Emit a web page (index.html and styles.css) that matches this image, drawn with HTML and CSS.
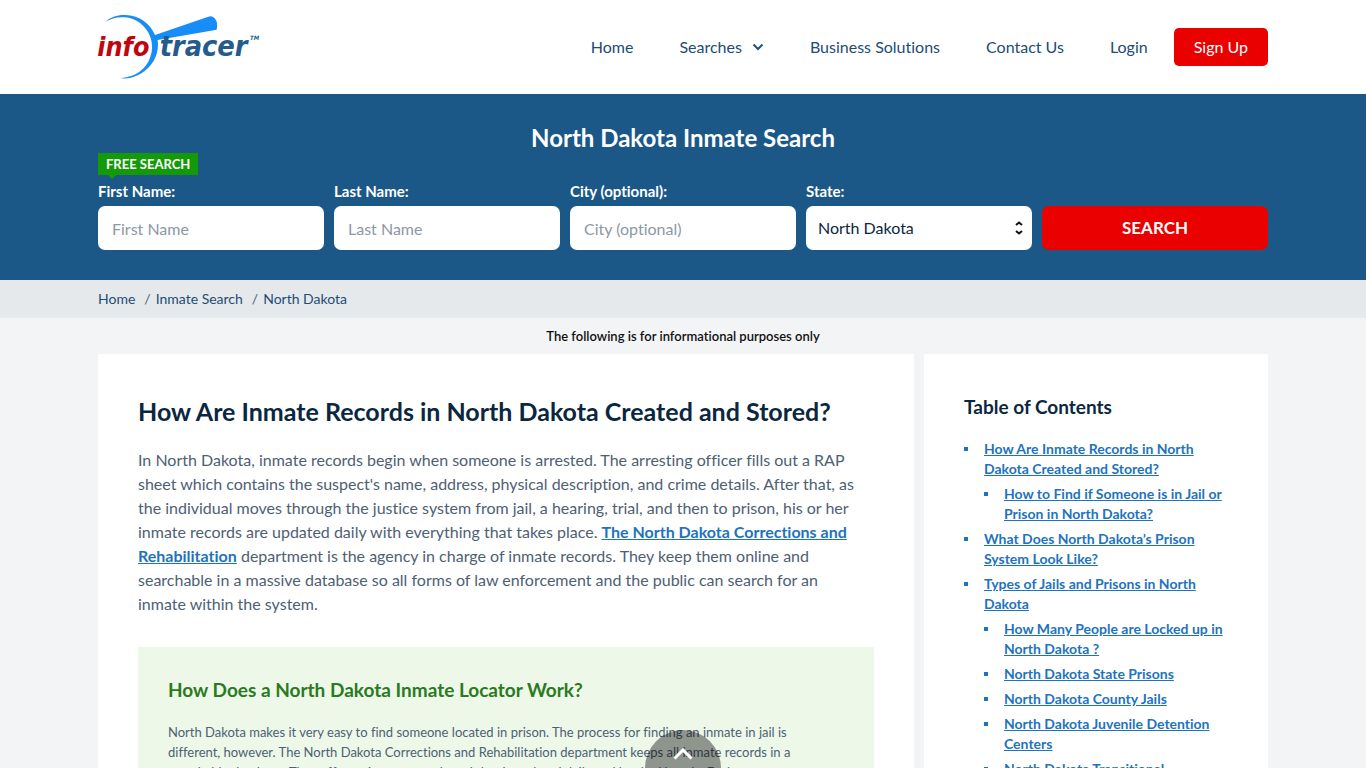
FILE: index.html
```html
<!DOCTYPE html>
<html lang="en">
<head>
<meta charset="utf-8">
<meta name="viewport" content="width=device-width, initial-scale=1">
<title>North Dakota Inmate Search</title>
<link rel="stylesheet" href="styles.css">
</head>
<body>
<header class="header">
  <div class="container header-row">
    <a class="logo" href="#" aria-label="InfoTracer">
      <svg viewBox="24 30 486 195" width="162" height="65" aria-hidden="true">
        <path fill="#168df7" d="M46 50C62 36 83 29 106 30C150 31 181 57 195 90L355 35Q366 31 374 40Q385 53 380 74L203 105C208 140 194 175 164 198C143 214 117 224 89 219C121 219 149 206 168 181C186 157 191 124 181 96C169 62 137 39 104 37C82 35 63 41 46 50Z"/>
        <text class="logo-info" x="22" y="153">info</text>
        <text class="logo-tracer" x="209" y="153">tracer</text>
        <text class="logo-tm" x="480" y="106">TM</text>
      </svg>
    </a>
    <nav class="nav" aria-label="Main">
      <a class="nav-link" href="#">Home</a>
      <a class="nav-link" href="#">Searches
        <svg class="chevron" viewBox="0 0 12 8" width="12" height="8" aria-hidden="true"><path d="M1.5 1.5L6 6L10.500 1.500"/></svg>
      </a>
      <a class="nav-link" href="#">Business Solutions</a>
      <a class="nav-link" href="#">Contact Us</a>
      <a class="nav-link" href="#">Login</a>
      <a class="signup" href="#">Sign Up</a>
    </nav>
  </div>
</header>

<section class="hero">
  <div class="container">
    <h1 class="hero-title">North Dakota Inmate Search</h1>
    <form class="search">
      <span class="free-tag">FREE SEARCH</span>
      <div class="field">
        <label for="first">First Name:</label>
        <input class="control" id="first" type="text" placeholder="First Name">
      </div>
      <div class="field">
        <label for="last">Last Name:</label>
        <input class="control" id="last" type="text" placeholder="Last Name">
      </div>
      <div class="field">
        <label for="city">City (optional):</label>
        <input class="control" id="city" type="text" placeholder="City (optional)">
      </div>
      <div class="field">
        <label for="state">State:</label>
        <div class="select-wrap">
          <select class="control select" id="state"><option>North Dakota</option></select>
          <svg class="select-icon" viewBox="0 0 8 14" width="8" height="14" aria-hidden="true"><path d="M1 4L4 1.500L7 4M1 10L4 12.500L7 10"/></svg>
        </div>
      </div>
      <button class="search-btn" type="submit">SEARCH</button>
    </form>
  </div>
</section>

<nav class="crumbs" aria-label="Breadcrumb">
  <ol class="container crumb-list">
    <li><a href="#">Home</a></li>
    <li><a href="#">Inmate Search</a></li>
    <li><a href="#">North Dakota</a></li>
  </ol>
</nav>

<p class="notice">The following is for informational purposes only</p>

<div class="container columns">
  <main class="panel article">
    <h2 class="title">How Are Inmate Records in North Dakota Created and Stored?</h2>
    <p class="text">In North Dakota, inmate records begin when someone is arrested. The arresting officer fills out a RAP sheet which contains the suspect's name, address, physical description, and crime details. After that, as the individual moves through the justice system from jail, a hearing, trial, and then to prison, his or her inmate records are updated daily with everything that takes place. <a class="link" href="#">The North Dakota Corrections and Rehabilitation</a> department is the agency in charge of inmate records. They keep them online and searchable in a massive database so all forms of law enforcement and the public can search for an inmate within the system.</p>
    <section class="callout">
      <h3 class="callout-title">How Does a North Dakota Inmate Locator Work?</h3>
      <p class="callout-text">North Dakota makes it very easy to find someone located in prison. The process for finding an inmate in jail is different, however. The North Dakota Corrections and Rehabilitation department keeps all inmate records in a searchable database. They offer an inmate search tool that is updated daily and booked hourly. Each</p>
    </section>
  </main>
  <aside class="panel toc">
    <h2 class="toc-title">Table of Contents</h2>
    <ul class="toc-list">
      <li><a href="#">How Are Inmate Records in North Dakota Created and Stored?</a>
        <ul>
          <li><a href="#">How to Find if Someone is in Jail or Prison in North Dakota?</a></li>
        </ul>
      </li>
      <li><a href="#">What Does North Dakota’s Prison System Look Like?</a></li>
      <li><a href="#">Types of Jails and Prisons in North Dakota</a>
        <ul>
          <li><a href="#">How Many People are Locked up in North Dakota ?</a></li>
          <li><a href="#">North Dakota State Prisons</a></li>
          <li><a href="#">North Dakota County Jails</a></li>
          <li><a href="#">North Dakota Juvenile Detention Centers</a></li>
          <li><a href="#">North Dakota Transitional</a></li>
        </ul>
      </li>
    </ul>
  </aside>
</div>

<button class="to-top" type="button" aria-label="Back to top">
  <svg viewBox="0 0 20 12" width="20" height="12" aria-hidden="true"><path d="M1.500 10.500L10 2L18.500 10.500"/></svg>
</button>
</body>
</html>
```

FILE: styles.css
```css
* { box-sizing: border-box; }

body {
  margin: 0;
  background: #f2f4f6;
  color: #4e6074;
  font: 16px/24px Lato, "Liberation Sans", sans-serif;
  font-variant-ligatures: none;
}

h1, h2, h3, p, ul, ol { margin: 0; padding: 0; }

.container {
  width: 100%;
  max-width: 1190px;
  margin: 0 auto;
  padding: 0 10px;
}

.header { background: #fff; }

.header-row {
  display: flex;
  align-items: center;
  justify-content: space-between;
  min-height: 94px;
}

.logo svg { display: block; overflow: visible; }

.logo text {
  font-family: "DejaVu Sans Condensed", "DejaVu Sans", sans-serif;
  font-stretch: condensed;
  font-style: italic;
  font-weight: 700;
}

.logo-info { fill: #c00510; font-size: 80px; }
.logo-tracer { fill: #245b8c; font-size: 86px; }
.logo .logo-tm { fill: #245b8c; font-size: 18px; }

.nav { display: flex; align-items: center; gap: 46px; }

.nav-link {
  display: flex;
  align-items: center;
  gap: 10px;
  color: #1d4c74;
  text-decoration: none;
}

.chevron path {
  fill: none;
  stroke: #1b5480;
  stroke-width: 2;
}

.signup {
  margin-left: -20px;
  padding: 7px 20px;
  border-radius: 5px;
  background: #eb0000;
  color: #fff;
  text-decoration: none;
}

.hero {
  padding: 30px 0;
  background: #1b5887;
  color: #fff;
}

.hero-title {
  font-size: 24px;
  line-height: 28px;
  text-align: center;
}

.search {
  position: relative;
  display: grid;
  grid-template-columns: repeat(5, 1fr);
  align-items: end;
  gap: 10px;
  margin-top: 1px;
  padding-top: 28px;
}

.free-tag {
  position: absolute;
  top: 0;
  left: 0;
  padding: 0 8px;
  background: #149a09;
  font-size: 13px;
  font-weight: 700;
  line-height: 22px;
}

.free-tag::after {
  content: "";
  position: absolute;
  top: 100%;
  left: 10px;
  border: 4px solid transparent;
  border-top-color: #149a09;
  border-bottom: 0;
}

.field label {
  display: block;
  padding-bottom: 5px;
  font-size: 15px;
  font-weight: 700;
  line-height: 20px;
}

.control {
  display: block;
  width: 100%;
  height: 44px;
  padding: 0 14px;
  border: 0;
  border-radius: 7px;
  background: #fff;
  color: #0b2740;
  font: inherit;
  font-variant-ligatures: none;
}

.control::placeholder { color: #8d98a5; opacity: 1; }

.select-wrap { position: relative; }
.select { padding: 0 12px; appearance: none; }

.select-icon {
  position: absolute;
  top: 15px;
  right: 9px;
  pointer-events: none;
}

.select-icon path {
  fill: none;
  stroke: #111;
  stroke-width: 2;
}

.search-btn {
  height: 44px;
  border: 0;
  border-radius: 7px;
  background: #eb0000;
  color: #fff;
  font: 700 17px/24px Lato, sans-serif;
}

.crumbs { background: #e5e9ec; }

.crumb-list {
  display: flex;
  padding-top: 9px;
  padding-bottom: 9px;
  font-size: 14px;
  line-height: 20px;
  list-style: none;
}

.crumb-list a { color: #1d4c74; text-decoration: none; }
.crumb-list li + li::before { content: "/"; margin: 0 5px 0 9px; }

.notice {
  padding: 8px 10px;
  color: #111;
  font-size: 13px;
  font-weight: 600;
  line-height: 20px;
  text-align: center;
}

.columns {
  display: grid;
  grid-template-columns: minmax(0, 816fr) minmax(0, 344fr);
  gap: 10px;
}

.panel { background: #fff; padding: 40px; }

.title {
  margin-bottom: 20px;
  color: #0b2740;
  font-size: 25px;
  line-height: 34px;
}

.text { padding-right: 8px; }

.link { color: #1e73be; font-weight: 700; }

.callout {
  margin-top: 31px;
  padding: 30px;
  background: #edf8e9;
}

.callout-title {
  margin-bottom: 20px;
  color: #2a7a1e;
  font-size: 19px;
  line-height: 25px;
}

.callout-text { padding-right: 8px; font-size: 13px; line-height: 20px; }

.toc-title {
  margin-bottom: 20px;
  color: #0b2740;
  font-size: 19px;
  line-height: 25px;
}

.toc-list, .toc-list ul { list-style: none; }

.toc-list li {
  padding-left: 20px;
  font-size: 14px;
  font-weight: 700;
  line-height: 20px;
  margin-bottom: 5px;
  background: linear-gradient(#1e73be, #1e73be) 0 8px / 4px 4px no-repeat;
}

.toc-list ul { padding-top: 5px; }
.toc-list a { color: #1e73be; }

.to-top {
  position: fixed;
  bottom: -38px;
  left: 50%;
  width: 76px;
  height: 76px;
  margin-left: -38px;
  padding: 17px 0 0;
  border: 0;
  border-radius: 50%;
  background: rgba(0, 0, 0, .4);
}

.to-top svg { display: block; margin: 0 auto 46px; }

.to-top path {
  fill: none;
  stroke: #fff;
  stroke-width: 3;
}
```
